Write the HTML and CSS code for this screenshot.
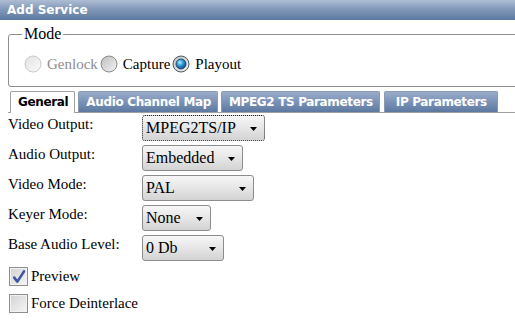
FILE: index.html
```html
<!DOCTYPE html>
<html>
<head>
<meta charset="utf-8">
<title>Add Service</title>
<link rel="stylesheet" href="styles.css">
</head>
<body>
<div class="titlebar">Add Service</div>
<div class="content">
  <fieldset class="mode">
    <legend>Mode</legend>
    <div class="radios">
      <label class="radio disabled">
        <svg class="rb" width="18" height="18" viewBox="0 0 18 18">
          <defs><linearGradient id="gd" x1="0" y1="0" x2="1" y2="1"><stop offset="0" stop-color="#e2e2e2"/><stop offset="1" stop-color="#fafafa"/></linearGradient></defs>
          <circle cx="9" cy="9" r="8" fill="url(#gd)" stroke="#c9c9c9" stroke-width="1"/>
        </svg>
        <span>Genlock</span>
      </label>
      <label class="radio">
        <svg class="rb" width="18" height="18" viewBox="0 0 18 18">
          <defs><linearGradient id="gu" x1="0" y1="0" x2="1" y2="1"><stop offset="0" stop-color="#bdbdbd"/><stop offset="1" stop-color="#f4f4f4"/></linearGradient></defs>
          <circle cx="9" cy="9" r="8" fill="url(#gu)" stroke="#8a8a8a" stroke-width="1"/>
        </svg>
        <span>Capture</span>
      </label>
      <label class="radio">
        <svg class="rb" width="18" height="18" viewBox="0 0 18 18">
          <defs>
            <linearGradient id="gc" x1="0" y1="0" x2="1" y2="1"><stop offset="0" stop-color="#bdbdbd"/><stop offset="1" stop-color="#f4f4f4"/></linearGradient>
            <radialGradient id="gb" cx="0.4" cy="0.35" r="0.7"><stop offset="0" stop-color="#b8ecff"/><stop offset="0.45" stop-color="#2f9ad8"/><stop offset="1" stop-color="#0a3f78"/></radialGradient>
          </defs>
          <circle cx="9" cy="9" r="8" fill="url(#gc)" stroke="#505a66" stroke-width="1"/>
          <circle cx="9" cy="9" r="5" fill="url(#gb)" stroke="#123a66" stroke-width="0.8"/>
        </svg>
        <span>Playout</span>
      </label>
    </div>
  </fieldset>

  <div class="tabs">
    <div class="tab active">General</div>
    <div class="tab">Audio Channel Map</div>
    <div class="tab">MPEG2 TS Parameters</div>
    <div class="tab tab-last">IP Parameters</div>
  </div>

  <div class="form">
    <div class="row">
      <span class="lbl">Video Output:</span>
      <div class="select focus sel-output"><span>MPEG2TS/IP</span><svg class="arrow" width="7" height="4" viewBox="0 0 7 4"><polygon points="0,0 7,0 3.5,4" fill="#000"/></svg></div>
    </div>
    <div class="row">
      <span class="lbl">Audio Output:</span>
      <div class="select sel-audio"><span>Embedded</span><svg class="arrow" width="7" height="4" viewBox="0 0 7 4"><polygon points="0,0 7,0 3.5,4" fill="#000"/></svg></div>
    </div>
    <div class="row">
      <span class="lbl">Video Mode:</span>
      <div class="select sel-mode"><span>PAL</span><svg class="arrow" width="7" height="4" viewBox="0 0 7 4"><polygon points="0,0 7,0 3.5,4" fill="#000"/></svg></div>
    </div>
    <div class="row">
      <span class="lbl">Keyer Mode:</span>
      <div class="select sel-keyer"><span>None</span><svg class="arrow" width="7" height="4" viewBox="0 0 7 4"><polygon points="0,0 7,0 3.5,4" fill="#000"/></svg></div>
    </div>
    <div class="row">
      <span class="lbl">Base Audio Level:</span>
      <div class="select sel-level"><span>0 Db</span><svg class="arrow" width="7" height="4" viewBox="0 0 7 4"><polygon points="0,0 7,0 3.5,4" fill="#000"/></svg></div>
    </div>

    <label class="check">
      <span class="box">
        <svg width="16" height="16" viewBox="0 0 16 16"><path d="M3.2 8.6 L6.4 12.6 L13 2.4" fill="none" stroke="#3f56a3" stroke-width="2.6" stroke-linecap="round" stroke-linejoin="round"/></svg>
      </span>
      <span>Preview</span>
    </label>
    <label class="check">
      <span class="box"></span>
      <span>Force Deinterlace</span>
    </label>
  </div>
</div>
</body>
</html>
```

FILE: styles.css
```css
html, body {
  margin: 0;
  padding: 0;
  overflow: hidden;
  background: #fff;
}

body {
  font-family: "Liberation Serif", "Times New Roman", serif;
  font-size: 15px;
  color: #000;
}

.titlebar {
  height: 20px;
  line-height: 20px;
  padding-left: 7px;
  font-family: "DejaVu Sans", Verdana, sans-serif;
  font-weight: bold;
  font-size: 12px;
  color: #fff;
  background: linear-gradient(#aebdd3, #8399b9 45%, #5c789f);
}

.content {
  padding-left: 8px;
}

.mode {
  margin: 5px -30px 0 0;
  padding: 12px 0 13px 13px;
  border: 1px solid #8e8e8e;
  border-radius: 3px;
}

.mode legend {
  padding: 0 2px;
  font-size: 16px;
  line-height: 18px;
}

.radios {
  display: flex;
  align-items: center;
  height: 18px;
  line-height: 18px;
  font-family: "Liberation Serif", "Times New Roman", serif;
}

.radio {
  display: flex;
  align-items: center;
}

.radio .rb {
  margin: 0 5px 0 2px;
  flex: none;
}

.radio.disabled {
  color: #8d8d8d;
}

.tabs {
  display: flex;
  margin: 4px -30px 0 0;
  height: 21px;
  border-bottom: 1px solid #a0a0a0;
  font-family: "DejaVu Sans", Verdana, sans-serif;
  font-weight: bold;
  font-size: 12px;
  letter-spacing: -0.35px;
}

.tab {
  margin-left: 3px;
  padding: 0 6px 0 7px;
  line-height: 20px;
  height: 20px;
  color: #fff;
  background: linear-gradient(#9aadca, #7a92b6 50%, #5d79a0);
  border: 1px solid #8a9ab4;
  border-bottom: none;
  border-radius: 2px 2px 0 0;
}

.tab:first-child {
  margin-left: 2px;
}

.tab-last {
  margin-left: 4px;
  padding: 0 10px 0 11px;
}

.tab.active {
  height: 21px;
  color: #000;
  background: #fff;
  border-color: #a0a0a0;
}

.form {
  padding-top: 1px;
}

.row {
  display: flex;
  height: 30px;
}

.lbl {
  width: 134px;
  flex: none;
  line-height: 20px;
}

.select {
  box-sizing: border-box;
  margin-top: 1px;
  height: 26px;
  display: flex;
  align-items: center;
  justify-content: space-between;
  padding: 0 7px 0 3px;
  border: 1px solid #8d8d8d;
  border-radius: 3px;
  background: linear-gradient(#f7f7f7, #e6e6e6 50%, #d3d3d3);
  font-size: 16px;
  line-height: 20px;
}

.select.focus {
  border: 1px dotted #222;
}

.select .arrow {
  flex: none;
  margin-top: 1px;
}

.sel-output { width: 123px; }
.sel-audio { width: 101px; }
.sel-mode { width: 112px; }
.sel-keyer { width: 69px; }
.sel-level { width: 82px; }

.check {
  display: flex;
  align-items: center;
  height: 27px;
}

.check:first-of-type {
  margin-top: -1px;
}

.box {
  box-sizing: border-box;
  width: 19px;
  height: 19px;
  margin: 0 3px 0 1px;
  border: 1px solid #8f8f8f;
  background: linear-gradient(135deg, #d2d2d2, #f6f6f6);
  box-shadow: inset 0 0 0 1px #f2f2f2;
  display: flex;
  align-items: center;
  justify-content: center;
  flex: none;
}
```
